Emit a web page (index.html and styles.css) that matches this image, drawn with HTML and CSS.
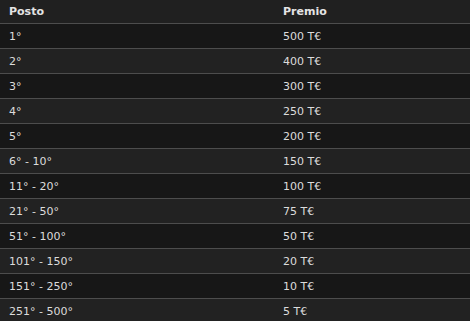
FILE: index.html
```html
<!DOCTYPE html>
<html lang="it">
<head>
<meta charset="utf-8">
<title>Premi</title>
<link rel="stylesheet" href="styles.css">
</head>
<body>
<table class="prizes">
  <thead>
    <tr><th>Posto</th><th>Premio</th></tr>
  </thead>
  <tbody>
    <tr><td>1°</td><td>500 T€</td></tr>
    <tr><td>2°</td><td>400 T€</td></tr>
    <tr><td>3°</td><td>300 T€</td></tr>
    <tr><td>4°</td><td>250 T€</td></tr>
    <tr><td>5°</td><td>200 T€</td></tr>
    <tr><td>6° - 10°</td><td>150 T€</td></tr>
    <tr><td>11° - 20°</td><td>100 T€</td></tr>
    <tr><td>21° - 50°</td><td>75 T€</td></tr>
    <tr><td>51° - 100°</td><td>50 T€</td></tr>
    <tr><td>101° - 150°</td><td>20 T€</td></tr>
    <tr><td>151° - 250°</td><td>10 T€</td></tr>
    <tr><td>251° - 500°</td><td>5 T€</td></tr>
  </tbody>
</table>
</body>
</html>
```
FILE: styles.css
```css
html, body {
  margin: 0;
  padding: 0;
  background: #222222;
  overflow: hidden;
}
.prizes {
  width: 470px;
  border-collapse: collapse;
  table-layout: fixed;
  font-family: "DejaVu Sans", Verdana, sans-serif;
  font-size: 11px;
  color: #dcdcdc;
}
.prizes th,
.prizes td {
  text-align: left;
  padding: 0 0 0 9px;
  white-space: nowrap;
}
.prizes th:first-child,
.prizes td:first-child {
  width: 265px;
}
.prizes thead tr {
  height: 23px;
  background: #202020;
}
.prizes th {
  font-weight: bold;
  color: #e4e4e4;
  vertical-align: top;
  padding-top: 5px;
}
.prizes tbody tr {
  height: 25px;
  border-top: 1px solid #4d4d4d;
}
.prizes tbody td {
  padding-top: 1px;
}
.prizes tbody tr:nth-child(odd) {
  background: #171717;
}
.prizes tbody tr:nth-child(even) {
  background: #222222;
}
```
